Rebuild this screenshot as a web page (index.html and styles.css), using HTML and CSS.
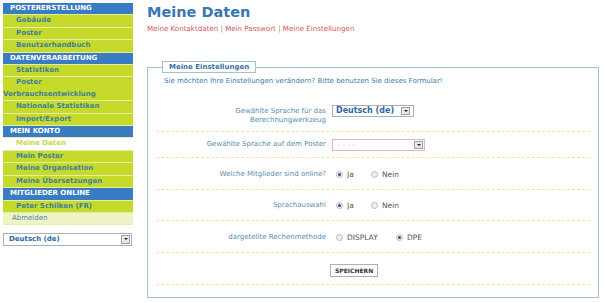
FILE: index.html
```html
<!DOCTYPE html>
<html lang="de">
<head>
  <meta charset="UTF-8" />
  <title>Meine Daten</title>
  <link rel="stylesheet" href="styles.css">
</head>
<body>
  <div class="page">
    <!-- Sidebar menu -->
    <div class="sidebar">
      <ul class="menu">
        <li class="head">POSTERERSTELLUNG</li>
        <li class="item">Gebäude</li>
        <li class="item">Poster</li>
        <li class="item">Benutzerhandbuch</li>
        <li class="head">DATENVERARBEITUNG</li>
        <li class="item">Statistiken</li>
        <li class="item">Poster Verbrauchsentwicklung</li>
        <li class="item">Nationale Statistiken</li>
        <li class="item">Import/Export</li>
        <li class="head">MEIN KONTO</li>
        <li class="item active">Meine Daten</li>
        <li class="item">Mein Poster</li>
        <li class="item">Meine Organisation</li>
        <li class="item">Meine Übersetzungen</li>
        <li class="head">MITGLIEDER ONLINE</li>
        <li class="item">Peter Schilken (FR)</li>
        <li class="logout">Abmelden</li>
      </ul>
      <div class="select side-select">
        <span class="select-text">Deutsch (de)</span>
        <span class="select-btn"></span>
      </div>
    </div>

    <!-- Main content -->
    <div class="main">
      <h1>Meine Daten</h1>
      <div class="sublinks">
        <a>Meine Kontaktdaten</a> | <a>Mein Passwort</a> | <a>Meine Einstellungen</a>
      </div>

      <fieldset class="box">
        <legend>Meine Einstellungen</legend>
        <p class="intro">Sie möchten Ihre Einstellungen verändern? Bitte benutzen Sie dieses Formular!</p>

        <div class="row top">
          <label>Gewählte Sprache für das<br>Berechnungwerkzeug</label>
          <div class="select lang-select">
            <span class="select-text">Deutsch (de)</span>
            <span class="select-btn"></span>
          </div>
        </div>

        <div class="row">
          <label>Gewählte Sprache auf dem Poster</label>
          <div class="select poster-select">
            <span class="select-text">- - - -</span>
            <span class="select-btn"></span>
          </div>
        </div>

        <div class="row tall">
          <label>Welche Mitglieder sind online?</label>
          <div class="choices">
            <span class="choice"><span class="radio checked"></span>Ja</span>
            <span class="choice"><span class="radio"></span>Nein</span>
          </div>
        </div>

        <div class="row tall">
          <label>Sprachauswahl</label>
          <div class="choices">
            <span class="choice"><span class="radio checked"></span>Ja</span>
            <span class="choice"><span class="radio"></span>Nein</span>
          </div>
        </div>

        <div class="row tall">
          <label>dargetellte Rechenmethode</label>
          <div class="choices">
            <span class="choice wide"><span class="radio"></span>DISPLAY</span>
            <span class="choice"><span class="radio checked"></span>DPE</span>
          </div>
        </div>

        <div class="row submit">
          <label></label>
          <button type="submit">SPEICHERN</button>
        </div>
      </fieldset>
    </div>
  </div>
</body>
</html>
```

FILE: styles.css
```css
body {
  font-family: "DejaVu Sans", Verdana, sans-serif;
  font-size: 7px;
  background: white;
  margin: 0;
}

.page {
  display: flex;
  padding: 3px 0 0 3px;
}

/* Sidebar */

.sidebar {
  width: 130px;
  flex-shrink: 0;
}

.menu {
  list-style: none;
  margin: 0;
  padding: 0;
}

.menu li {
  line-height: 11.4px;
  border-bottom: 1px solid #e4eea0;
}

.head {
  background: #3a7cc2;
  color: white;
  font-weight: bold;
  padding-left: 7px;
}

.item {
  background: #c6da2c;
  color: #3f7f9a;
  font-weight: bold;
  text-indent: 13px;
}

.item.active {
  background: white;
  color: #c8d850;
}

.logout {
  background: #eef4c6;
  color: #4d86a2;
  padding-left: 9px;
}

.select {
  position: relative;
  border: 1px solid #a9b0b8;
  background: white;
  height: 10px;
  line-height: 10px;
}

.select-text {
  color: #2f67a0;
  font-weight: bold;
  padding-left: 5px;
}

.select-btn {
  position: absolute;
  right: 1px;
  top: 1px;
  width: 9px;
  height: 8px;
  background: #e8e8e8;
  border: 1px solid #a0a0a0;
  box-sizing: border-box;
}

.select-btn::after {
  content: "";
  position: absolute;
  left: 2px;
  top: 2px;
  border-left: 2px solid transparent;
  border-right: 2px solid transparent;
  border-top: 2px solid #222;
}

.side-select {
  margin-top: 8px;
  width: 127px;
  height: 11px;
  line-height: 11px;
}

.side-select .select-btn {
  top: 1px;
  height: 9px;
}

/* Main */

.main {
  margin-left: 14px;
  width: 452px;
}

h1 {
  font-size: 14.5px;
  color: #3a76b2;
  margin: 0;
  line-height: 18px;
}

.sublinks {
  margin-top: 3px;
  color: #888;
  font-size: 7.1px;
}

.sublinks a {
  color: #d2575c;
}

.box {
  margin: 28px 0 0 0;
  border: 1px solid #a8c0ca;
  padding: 4px 8px 12px 8px;
}

legend {
  margin-left: 6px;
  padding: 1px 6px;
  border: 1px solid #a8c0ca;
  color: #3a70a4;
  font-weight: bold;
  font-size: 7px;
}

.intro {
  color: #3e7aa8;
  margin: 0 0 14px 8px;
}

.row {
  display: flex;
  align-items: center;
  padding: 6.5px 0;
  border-bottom: 1px dashed #ece6a8;
}

.row.top {
  align-items: flex-start;
  padding: 6px 0;
}

.row.top label {
  margin-top: 2px;
}

.row label {
  width: 170px;
  text-align: right;
  color: #5a8cae;
  margin-right: 6px;
  line-height: 9px;
}

.row.tall {
  padding: 11.5px 0 10px 0;
}

.lang-select {
  width: 80px;
  height: 10px;
}

.lang-select .select-text {
  font-size: 8px;
  padding-left: 3px;
}

.lang-select .select-btn {
  right: 3px;
}

.poster-select {
  width: 91px;
  border-color: #dcb8be;
}

.poster-select .select-text {
  color: #b0b0b0;
  font-weight: normal;
}

.choices {
  display: flex;
  margin-left: 4px;
}

.choice {
  display: flex;
  align-items: center;
  width: 35px;
  color: #555;
  font-size: 7.5px;
}

.choice.wide {
  width: 60px;
}

.radio {
  width: 7px;
  height: 7px;
  border: 1px solid #b8bcc0;
  border-radius: 50%;
  background: #f0f0f0;
  margin-right: 4px;
  box-sizing: border-box;
  position: relative;
}

.radio.checked::after {
  content: "";
  position: absolute;
  left: 1px;
  top: 1px;
  width: 3px;
  height: 3px;
  border-radius: 50%;
  background: #2c4c88;
}

.row.submit {
  padding: 11px 0 7px 0;
}

.row.submit label {
  margin-right: 4px;
}

button {
  font-family: inherit;
  font-size: 6px;
  font-weight: bold;
  color: #333;
  background: white;
  border: 1px solid #b0b0b0;
  padding: 2px 4px;
}
```
